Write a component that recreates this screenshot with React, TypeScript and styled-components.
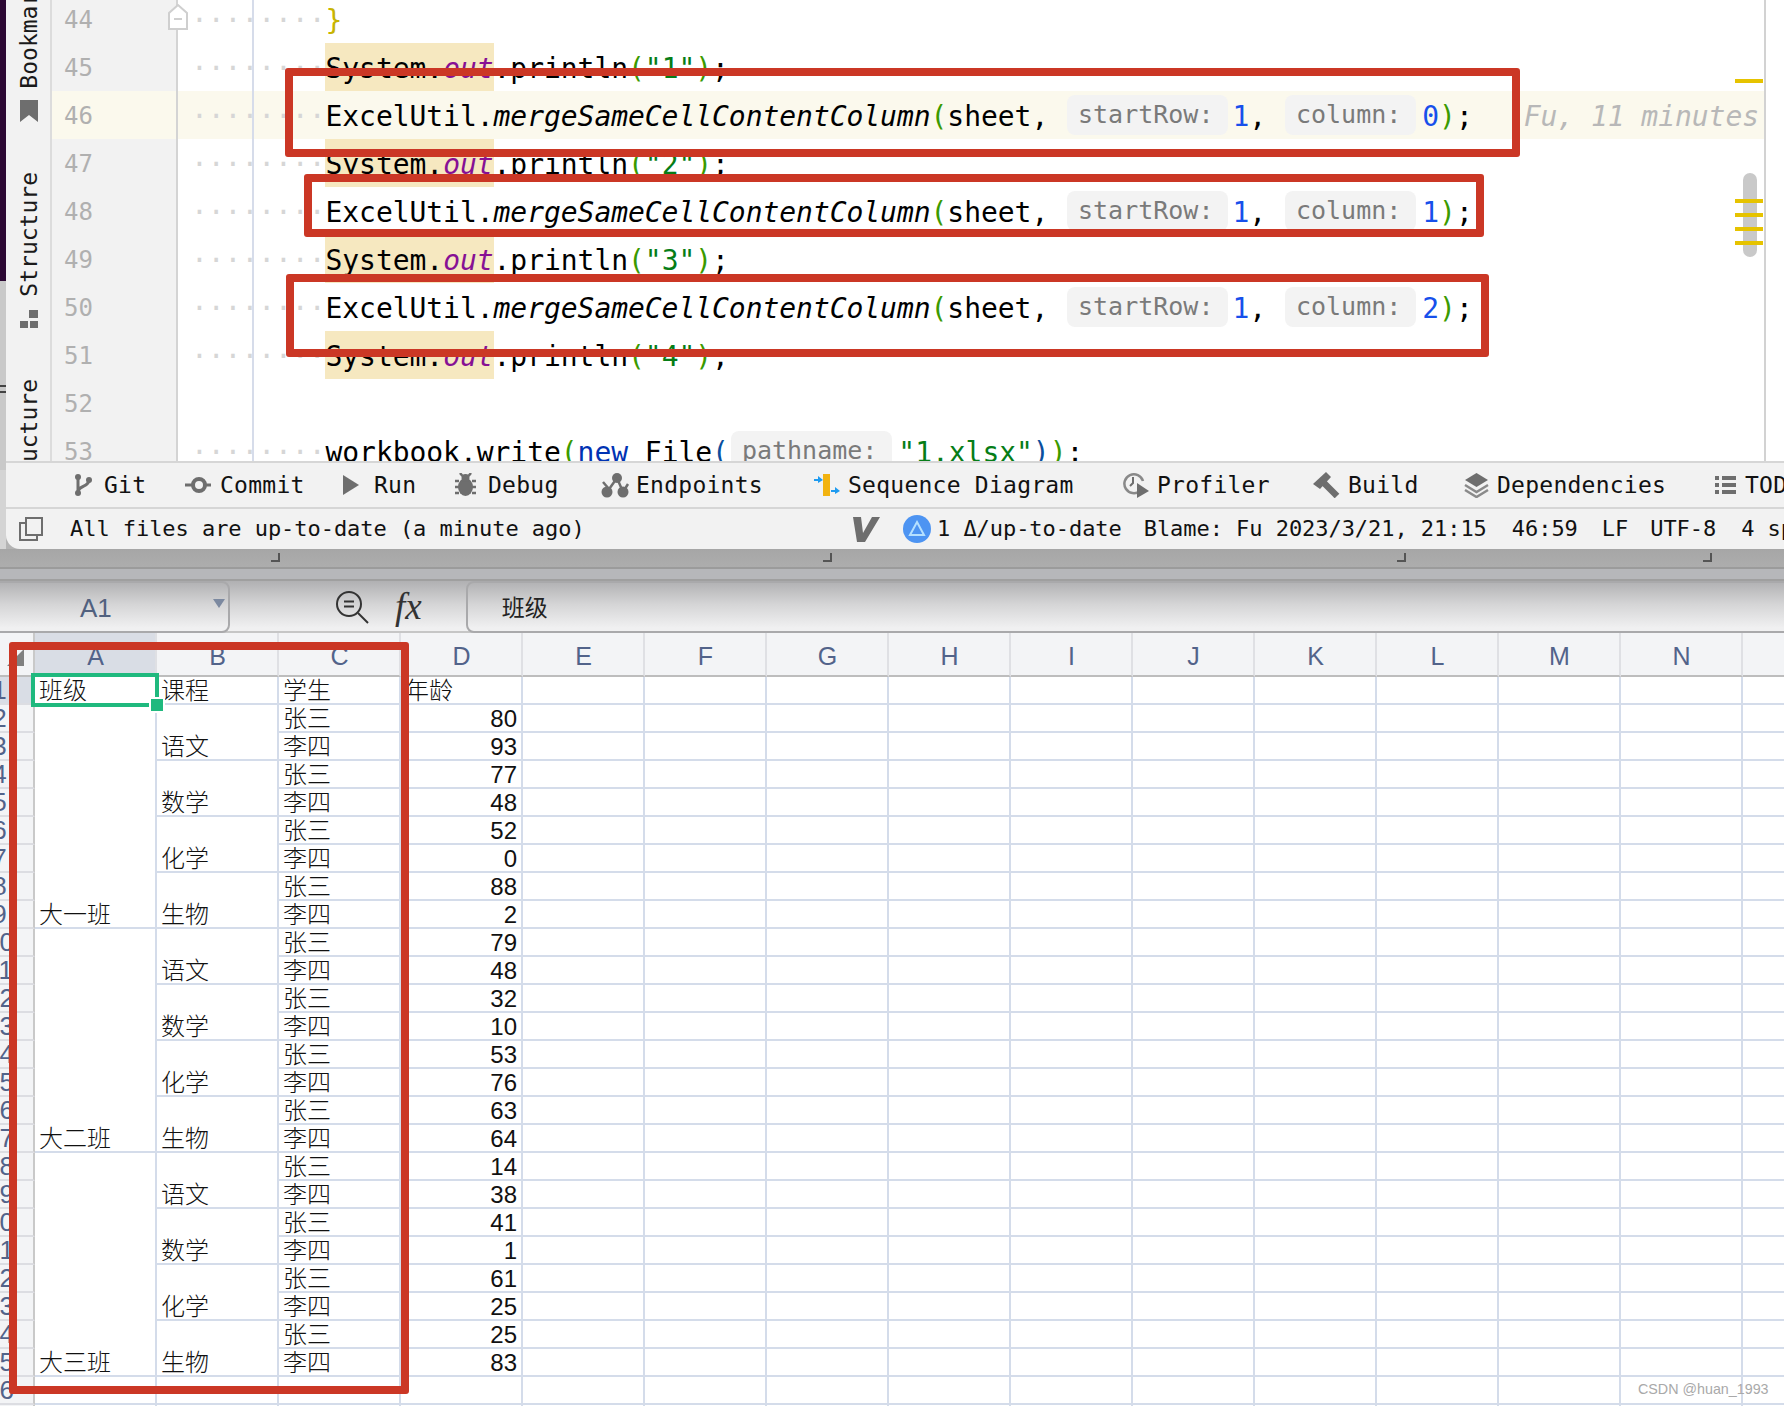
import React from "react";
import styled, { createGlobalStyle } from "styled-components";

const MONO = `"DejaVu Sans Mono", "Liberation Mono", monospace`;
const RED = "#cb3725";

const GlobalStyle = createGlobalStyle`
	html, body {
		margin: 0;
		padding: 0;
		background: #ffffff;
	}
	* {
		box-sizing: border-box;
	}
`;

const Screen = styled.div`
	position: relative;
	width: 1784px;
	height: 1406px;
	overflow: hidden;
	background: #ffffff;
`;

/* ---------- IDE window ---------- */

const Desktop = styled.div`
	display: flex;
	height: 549px;
	background: #b4b4b4;
`;

const DesktopEdge = styled.div`
	width: 6px;
	background: linear-gradient(
		#2c0833 0 281px,
		#c9c9c9 281px 385px,
		#444 385px 387px,
		#c9c9c9 387px 391px,
		#444 391px 393px,
		#c9c9c9 393px 470px,
		#d4d4d4 470px 549px
	);
`;

const IdeWindow = styled.div`
	flex: 1;
	display: flex;
	flex-direction: column;
	min-width: 0;
	overflow: hidden;
	border-bottom-left-radius: 14px;
	background: #f2f2f2;
`;

const EditorBody = styled.div`
	position: relative;
	display: flex;
	height: 461px;
	overflow: hidden;
	background: #ffffff;
`;

const SideStrip = styled.div`
	width: 46px;
	flex-shrink: 0;
	display: flex;
	flex-direction: column;
	align-items: center;
	overflow: hidden;
	background: #f2f2f2;
	border-right: 2px solid #dcdcdc;
	padding-left: 2px;
`;

const SideLabel = styled.div<{ $top: number }>`
	margin-top: ${(p) => p.$top}px;
	flex-shrink: 0;
	writing-mode: vertical-rl;
	transform: rotate(180deg);
	font: 23px/24px ${MONO};
	color: #1a1a1a;
	white-space: nowrap;
`;

const SideIcon = styled.svg<{ $top: number }>`
	margin-top: ${(p) => p.$top}px;
	flex-shrink: 0;
`;

const CodePane = styled.div`
	flex: 1;
	min-width: 0;
	overflow: hidden;
`;

const Lines = styled.div`
	margin-top: -5px;
`;

const Line = styled.div<{ $current?: boolean }>`
	display: flex;
	height: 48px;
	background: ${(p) => (p.$current ? "#fbf9ed" : "transparent")};
`;

const Gutter = styled.div<{ $current?: boolean }>`
	position: relative;
	width: 126px;
	flex-shrink: 0;
	padding-left: 12px;
	font: 24px/50px ${MONO};
	color: #b0b0b0;
	background: ${(p) => (p.$current ? "#fbf9ed" : "#f2f2f2")};
	border-right: 2px solid #d4d4d4;
`;

const FoldMark = styled.svg`
	position: absolute;
	left: 116px;
	top: 9px;
	z-index: 2;
`;

const CodeCell = styled.div`
	flex: 1;
	min-width: 0;
	height: 48px;
	overflow: hidden;
	padding-left: 13px;
	font: 28px/51px ${MONO};
	letter-spacing: -0.05px;
	color: #000000;
	white-space: pre;
	background-image: linear-gradient(#d6dcea, #d6dcea);
	background-size: 2px 100%;
	background-position: 74px 0;
	background-repeat: no-repeat;
`;

const Dots = styled.span`
	color: #d6d6d6;
`;

const Hl = styled.span`
	display: inline-block;
	height: 48px;
	vertical-align: top;
	background: #f6e8c0;
`;

const Field = styled.span`
	font-style: italic;
	color: #871094;
`;

const Method = styled.span`
	font-style: italic;
`;

const Paren = styled.span<{ $c?: string }>`
	color: ${(p) => p.$c || "#3a9a00"};
`;

const Str = styled.span`
	color: #067d17;
`;

const Num = styled.span`
	color: #1750eb;
`;

const Keyword = styled.span`
	color: #0033b3;
`;

const Hint = styled.span<{ $ml?: number; $mr?: number }>`
	display: inline-block;
	height: 40px;
	padding: 0 15px 0 11px;
	margin-left: ${(p) => p.$ml ?? 2}px;
	margin-right: ${(p) => p.$mr ?? 6}px;
	border-radius: 8px;
	font-size: 25px;
	line-height: 40px;
	letter-spacing: 0;
	vertical-align: 3px;
	color: #7a7a7a;
	background: #f3f3f3;
`;

const Blame = styled.span`
	margin-left: 51px;
	font-style: italic;
	color: #b8b8b8;
`;

const StripeEdge = styled.div`
	width: 20px;
	flex-shrink: 0;
	background: #ffffff;
	border-left: 2px solid #d2d2d2;
`;

const ScrollThumb = styled.div`
	position: absolute;
	left: 1737px;
	top: 173px;
	width: 14px;
	height: 84px;
	border-radius: 7px;
	background: #c9c9c9;
`;

const StripeMark = styled.div<{ $y: number }>`
	position: absolute;
	left: 1729px;
	top: ${(p) => p.$y}px;
	width: 28px;
	height: 4px;
	background: #e6c300;
`;

/* ---------- tool bar + status bar ---------- */

const ToolBar = styled.div`
	display: flex;
	align-items: center;
	height: 46px;
	padding-left: 67px;
	border-top: 2px solid #d6d6d6;
	white-space: nowrap;
`;

const ToolItem = styled.div<{ $w: number }>`
	display: flex;
	align-items: center;
	width: ${(p) => p.$w}px;
	flex-shrink: 0;
`;

const ToolIcon = styled.div<{ $w: number }>`
	width: ${(p) => p.$w}px;
	height: 28px;
	flex-shrink: 0;
	display: flex;
	align-items: center;
`;

const ToolLabel = styled.span`
	font: 23px/28px ${MONO};
	letter-spacing: 0.25px;
	color: #111111;
`;

const StatusBar = styled.div`
	display: flex;
	align-items: center;
	height: 42px;
	padding-left: 13px;
	border-top: 2px solid #d6d6d6;
	white-space: nowrap;
	overflow: hidden;
`;

const StatusGlyph = styled.svg`
	flex-shrink: 0;
`;

const StatusText = styled.span<{ $left: number }>`
	margin-left: ${(p) => p.$left}px;
	flex-shrink: 0;
	font: 22px/28px ${MONO};
	letter-spacing: -0.05px;
	color: #111111;
`;

const StatusMessage = styled(StatusText)`
	width: 783px;
`;

const StatusCircle = styled.svg`
	margin-left: 23px;
	flex-shrink: 0;
`;

/* ---------- formula bar ---------- */

const FormulaArea = styled.div`
	height: 84px;
	background: #ababab;
`;

const ShadowBand = styled.div`
	display: flex;
	height: 20px;
	padding-top: 4px;
	background: linear-gradient(#a6a6a6, #adadad);
	border-bottom: 2px solid #9b9b9b;
`;

const CropMark = styled.div<{ $left: number }>`
	width: 9px;
	height: 9px;
	margin-left: ${(p) => p.$left}px;
	border-right: 2px solid #555;
	border-bottom: 2px solid #555;
`;

const SliverBand = styled.div`
	height: 10px;
	background: #b6b7ba;
`;

const FormulaBar = styled.div`
	display: flex;
	align-items: center;
	height: 54px;
	background:
		linear-gradient(#c6c6c6, #c6c6c6) bottom / 100% 2px no-repeat,
		linear-gradient(#b0b0b2 0%, #d5d5d6 45%, #f0f0f1 90%);
	border-top: 2px solid #9f9f9f;
`;

const NameBox = styled.div`
	display: flex;
	align-items: center;
	width: 240px;
	height: 52px;
	margin-left: -10px;
	padding-left: 88px;
	padding-top: 2px;
	flex-shrink: 0;
	border: 2px solid #a9a9ab;
	border-radius: 8px;
	font: 26px/30px "Liberation Sans", Arial, sans-serif;
	color: #51617f;
`;

const NameArrow = styled.div`
	margin-left: auto;
	margin-right: 3px;
	margin-top: -10px;
	border-left: 6px solid transparent;
	border-right: 6px solid transparent;
	border-top: 9px solid #7c89a0;
`;

const ZoomIcon = styled.svg`
	margin-left: 105px;
	flex-shrink: 0;
`;

const FxLabel = styled.span`
	margin-left: 26px;
	flex-shrink: 0;
	font: italic 37px/40px "Liberation Serif", serif;
	color: #333;
`;

const FormulaInput = styled.div`
	flex: 1;
	height: 52px;
	margin-left: 44px;
	margin-right: -10px;
	padding-left: 34px;
	border: 2px solid #a9a9ab;
	border-radius: 8px;
	font: 23px/46px "Noto Sans CJK SC", sans-serif;
	color: #222;
`;

/* ---------- sheet ---------- */

const Sheet = styled.div`
	position: relative;
	display: grid;
	grid-template-columns: 69px repeat(14, 122px) 60px;
	grid-template-rows: 44px;
	grid-auto-rows: 28px;
	margin-left: -34px;
	width: 1840px;
`;

const Corner = styled.div`
	display: flex;
	align-items: flex-end;
	justify-content: flex-end;
	padding: 0 9px 9px 0;
	background: #f3f4f6;
	border-right: 2px solid #c9c9c9;
	border-bottom: 2px solid #bdbdbd;
`;

const ColHead = styled.div<{ $active?: boolean }>`
	display: flex;
	align-items: center;
	justify-content: center;
	padding-top: 3px;
	padding-left: 1px;
	font: 25px/30px "Liberation Sans", Arial, sans-serif;
	color: #52638a;
	background: ${(p) => (p.$active ? "#d9dde5" : "#f3f4f6")};
	border-right: 2px solid #dfe0e4;
	border-bottom: 2px solid #bdbdbd;
`;

const RowHead = styled.div<{ $active?: boolean }>`
	text-align: center;
	font: 26px/26px "Liberation Sans", Arial, sans-serif;
	color: #52638a;
	background: ${(p) => (p.$active ? "#d9dde5" : "#f3f4f6")};
	border-right: 2px solid #c9c9c9;
	border-bottom: 2px solid #dcdde2;
`;

const Cell = styled.div<{ $span?: number; $num?: boolean }>`
	grid-row: span ${(p) => p.$span || 1};
	display: flex;
	align-items: flex-end;
	justify-content: ${(p) => (p.$num ? "flex-end" : "flex-start")};
	padding: ${(p) => (p.$num ? "0 4px 0 0" : "0 0 2px 4px")};
	font: ${(p) =>
		p.$num
			? `24px/24px "Liberation Sans", Arial, sans-serif`
			: `300 24px/24px "Noto Sans CJK SC", sans-serif`};
	color: #111;
	white-space: nowrap;
	overflow: hidden;
	background: #ffffff;
	border-right: 2px solid #d4dcea;
	border-bottom: 2px solid #d4dcea;
`;

const Selection = styled.div`
	position: absolute;
	left: 65px;
	top: 40px;
	width: 128px;
	height: 34px;
	border: 4px solid #1fb97e;
`;

const SelectionHandle = styled.div`
	position: absolute;
	left: 116px;
	top: 22px;
	width: 12px;
	height: 12px;
	background: #1fb97e;
	box-shadow: 0 0 0 2px #ffffff;
`;

/* ---------- things lying over the page ---------- */

const RedBox = styled.div<{ $x: number; $y: number; $w: number; $h: number }>`
	position: absolute;
	left: ${(p) => p.$x}px;
	top: ${(p) => p.$y}px;
	width: ${(p) => p.$w}px;
	height: ${(p) => p.$h}px;
	border: 8px solid ${RED};
	border-radius: 3px;
`;

const Watermark = styled.div`
	position: absolute;
	left: 1638px;
	top: 1381px;
	font: 14.3px/17px "Liberation Sans", Arial, sans-serif;
	color: #a9a9a9;
`;

const INDENT = "········";

const Println = ({ n }: { n: string }) => (
	<>
		<Dots>{INDENT}</Dots>
		<Hl>
			System.<Field>out</Field>
		</Hl>
		.println<Paren>(</Paren>
		<Str>"{n}"</Str>
		<Paren>)</Paren>;
	</>
);

const MergeCall = ({ col, blame }: { col: string; blame?: boolean }) => (
	<>
		<Dots>{INDENT}</Dots>
		ExcelUtil.<Method>mergeSameCellContentColumn</Method>
		<Paren>(</Paren>sheet, <Hint $mr={4}>startRow:</Hint>
		<Num>1</Num>, <Hint>column:</Hint>
		<Num>{col}</Num>
		<Paren>)</Paren>;{blame && <Blame>Fu, 11 minutes ago · Merge cells</Blame>}
	</>
);

const codeLines: { no: number; code?: React.ReactNode; current?: boolean }[] = [
	{
		no: 44,
		code: (
			<>
				<Dots>{INDENT}</Dots>
				<Paren $c="#c8b400">{"}"}</Paren>
			</>
		),
	},
	{ no: 45, code: <Println n="1" /> },
	{ no: 46, code: <MergeCall col="0" blame />, current: true },
	{ no: 47, code: <Println n="2" /> },
	{ no: 48, code: <MergeCall col="1" /> },
	{ no: 49, code: <Println n="3" /> },
	{ no: 50, code: <MergeCall col="2" /> },
	{ no: 51, code: <Println n="4" /> },
	{ no: 52 },
	{
		no: 53,
		code: (
			<>
				<Dots>{INDENT}</Dots>
				workbook.write<Paren>(</Paren>
				<Keyword>new</Keyword> File<Paren $c="#0b4f9e">(</Paren>
				<Hint $ml={2}>pathname:</Hint>
				<Str>"1.xlsx"</Str>
				<Paren $c="#0b4f9e">)</Paren>
				<Paren>)</Paren>;
			</>
		),
	},
];

const GREY = "#6e6e6e";

const tools: { label: string; w: number; iconW: number; icon: React.ReactNode }[] = [
	{
		label: "Git",
		w: 112,
		iconW: 31,
		icon: (
			<svg width="22" height="24" viewBox="0 0 22 24">
				<circle cx="5" cy="4" r="3" fill={GREY} />
				<circle cx="5" cy="20" r="3" fill={GREY} />
				<circle cx="16" cy="7" r="3" fill={GREY} />
				<path d="M5 4V20M16 7C16 14 7 12 5 18" fill="none" stroke={GREY} strokeWidth="3" />
			</svg>
		),
	},
	{
		label: "Commit",
		w: 158,
		iconW: 35,
		icon: (
			<svg width="26" height="18" viewBox="0 0 26 18">
				<circle cx="14" cy="9" r="6" fill="none" stroke={GREY} strokeWidth="4" />
				<path d="M0 9H7M21 9H26" stroke={GREY} strokeWidth="3" />
			</svg>
		),
	},
	{
		label: "Run",
		w: 112,
		iconW: 31,
		icon: (
			<svg width="16" height="22" viewBox="0 0 16 22">
				<path d="M0 1L16 11L0 21Z" fill={GREY} />
			</svg>
		),
	},
	{
		label: "Debug",
		w: 146,
		iconW: 33,
		icon: (
			<svg width="21" height="24" viewBox="0 0 21 24">
				<ellipse cx="10.5" cy="14" rx="7.5" ry="9" fill={GREY} />
				<circle cx="10.5" cy="5" r="4" fill={GREY} />
				<path
					d="M5 0L7.5 3M16 0L13.5 3M0 8H4M17 8H21M0 14H4M17 14H21M0 20H4M17 20H21"
					stroke={GREY}
					strokeWidth="2.5"
				/>
			</svg>
		),
	},
	{
		label: "Endpoints",
		w: 213,
		iconW: 35,
		icon: (
			<svg width="30" height="26" viewBox="0 0 30 26">
				<circle cx="16" cy="6" r="5" fill={GREY} />
				<circle cx="6" cy="20" r="5.5" fill={GREY} />
				<circle cx="22" cy="20" r="5.5" fill={GREY} />
				<path d="M16 6L6 20M16 6L22 20M8 17L2 10M22 20L27 12" stroke={GREY} strokeWidth="2.5" />
			</svg>
		),
	},
	{
		label: "Sequence Diagram",
		w: 309,
		iconW: 34,
		icon: (
			<svg width="26" height="24" viewBox="0 0 26 24">
				<rect x="9" y="1" width="7" height="22" fill="#f2b311" />
				<path d="M0 6H4V3L9 7L4 10V8H0Z" fill="#1e9bf0" />
				<path d="M17 17H21V14L26 18L21 21V19H17Z" fill="#1e9bf0" />
			</svg>
		),
	},
	{
		label: "Profiler",
		w: 190,
		iconW: 34,
		icon: (
			<svg width="27" height="26" viewBox="0 0 27 26">
				<path
					d="M17 19A9.5 9.5 0 1 1 20 9"
					fill="none"
					stroke={GREY}
					strokeOpacity="0.8"
					strokeWidth="2.5"
				/>
				<path d="M10 5V11L7 14" fill="none" stroke={GREY} strokeWidth="2" />
				<path d="M14 11L26 19L14 26Z" fill={GREY} />
			</svg>
		),
	},
	{
		label: "Build",
		w: 151,
		iconW: 35,
		icon: (
			<svg width="27" height="26" viewBox="0 0 27 26">
				<path d="M9 9L24 24" stroke={GREY} strokeWidth="6.5" />
				<path d="M0 12L13 0L18 5L7 17Z" fill={GREY} />
			</svg>
		),
	},
	{
		label: "Dependencies",
		w: 251,
		iconW: 33,
		icon: (
			<svg width="25" height="26" viewBox="0 0 25 26">
				<path d="M12.5 1L24 8L12.5 15L1 8Z" fill={GREY} />
				<path d="M1 13L12.5 20L24 13M1 18L12.5 25L24 18" fill="none" stroke="#8a8a8a" strokeWidth="2.5" />
			</svg>
		),
	},
	{
		label: "TODO",
		w: 80,
		iconW: 30,
		icon: (
			<svg width="21" height="20" viewBox="0 0 21 20">
				<path d="M0 3H4M7 3H21M0 10H4M7 10H21M0 17H4M7 17H21" stroke={GREY} strokeWidth="4" />
			</svg>
		),
	},
];

const COLS = ["A", "B", "C", "D", "E", "F", "G", "H", "I", "J", "K", "L", "M", "N", ""];
const EMPTY_COLS = 11;
const AGES = [80, 93, 77, 48, 52, 0, 88, 2, 79, 48, 32, 10, 53, 76, 63, 64, 14, 38, 41, 1, 61, 25, 25, 83];
const COURSES = ["语文", "数学", "化学", "生物"];
const CLASSES = ["大一班", "大二班", "大三班"];

const Blanks = ({ count, prefix }: { count: number; prefix: string }) => (
	<>
		{Array.from({ length: count }, (_, i) => (
			<Cell key={`${prefix}-${i}`} />
		))}
	</>
);

const SheetRows = () => {
	const rows: React.ReactNode[] = [];
	AGES.forEach((age, i) => {
		const rowNo = i + 2;
		rows.push(<RowHead key={`h${rowNo}`}>{rowNo}</RowHead>);
		if (i % 8 === 0) {
			rows.push(
				<Cell key={`a${rowNo}`} $span={8}>
					{CLASSES[i / 8]}
				</Cell>
			);
		}
		if (i % 2 === 0) {
			rows.push(
				<Cell key={`b${rowNo}`} $span={2}>
					{COURSES[(i / 2) % 4]}
				</Cell>
			);
		}
		rows.push(<Cell key={`c${rowNo}`}>{i % 2 === 0 ? "张三" : "李四"}</Cell>);
		rows.push(
			<Cell key={`d${rowNo}`} $num>
				{age}
			</Cell>
		);
		rows.push(<Blanks key={`e${rowNo}`} count={EMPTY_COLS} prefix={`r${rowNo}`} />);
	});
	return <>{rows}</>;
};

const App = () => {
	return (
		<Screen>
			<GlobalStyle />
			<Desktop>
				<DesktopEdge />
				<IdeWindow>
					<EditorBody>
						<SideStrip>
							<SideLabel $top={-36}>Bookmarks</SideLabel>
							<SideIcon $top={11} width="18" height="22" viewBox="0 0 18 22">
								<path d="M0 0H18V22L9 15L0 22Z" fill={GREY} />
							</SideIcon>
							<SideLabel $top={50}>Structure</SideLabel>
							<SideIcon $top={14} width="18" height="18" viewBox="0 0 18 18">
								<path d="M9 0H18V8H9ZM0 11H8V18H0ZM10 11H18V18H10Z" fill={GREY} />
							</SideIcon>
							<SideLabel $top={51}>Structure</SideLabel>
						</SideStrip>
						<CodePane>
							<Lines>
								{codeLines.map((l) => (
									<Line key={l.no} $current={l.current}>
										<Gutter $current={l.current}>
											{l.no}
											{l.no === 44 && (
												<FoldMark width="20" height="26" viewBox="0 0 20 26">
													<path d="M10 1L19 9V25H1V9Z" fill="#fff" stroke="#cfcfcf" strokeWidth="2" />
													<path d="M6 15H14" stroke="#cfcfcf" strokeWidth="2" />
												</FoldMark>
											)}
										</Gutter>
										<CodeCell>{l.code}</CodeCell>
									</Line>
								))}
							</Lines>
						</CodePane>
						<StripeEdge />
						<ScrollThumb />
						<StripeMark $y={79} />
						<StripeMark $y={199} />
						<StripeMark $y={213} />
						<StripeMark $y={227} />
						<StripeMark $y={241} />
					</EditorBody>
					<ToolBar>
						{tools.map((t) => (
							<ToolItem key={t.label} $w={t.w}>
								<ToolIcon $w={t.iconW}>{t.icon}</ToolIcon>
								<ToolLabel>{t.label}</ToolLabel>
							</ToolItem>
						))}
					</ToolBar>
					<StatusBar>
						<StatusGlyph width="24" height="24" viewBox="0 0 24 24">
							<path d="M7 1H23V18H7Z" fill="none" stroke={GREY} strokeWidth="2" />
							<path d="M7 6H1V23H18V18" fill="none" stroke={GREY} strokeWidth="2" />
						</StatusGlyph>
						<StatusMessage $left={27}>All files are up-to-date (a minute ago)</StatusMessage>
						<StatusGlyph width="27" height="25" viewBox="0 0 27 25">
							<path d="M0 0H8L10 16L19 0H27L12 25H4Z" fill={GREY} />
						</StatusGlyph>
						<StatusCircle width="28" height="28" viewBox="0 0 28 28">
							<circle cx="14" cy="14" r="14" fill="#4d94f2" />
							<path d="M14 7L21 20H7Z" fill="none" stroke="#b5e0ff" strokeWidth="2" />
						</StatusCircle>
						<StatusText $left={6}>1 Δ/up-to-date</StatusText>
						<StatusText $left={22}>Blame: Fu 2023/3/21, 21:15</StatusText>
						<StatusText $left={25}>46:59</StatusText>
						<StatusText $left={24}>LF</StatusText>
						<StatusText $left={22}>UTF-8</StatusText>
						<StatusText $left={25}>4 spaces</StatusText>
					</StatusBar>
				</IdeWindow>
			</Desktop>

			<FormulaArea>
				<ShadowBand>
					<CropMark $left={271} />
					<CropMark $left={543} />
					<CropMark $left={565} />
					<CropMark $left={297} />
				</ShadowBand>
				<SliverBand />
				<FormulaBar>
					<NameBox>
						A1
						<NameArrow />
					</NameBox>
					<ZoomIcon width="34" height="34" viewBox="0 0 34 34">
						<circle cx="14" cy="14" r="12" fill="none" stroke="#333" strokeWidth="2" />
						<path d="M23 23L33 33" stroke="#333" strokeWidth="2" />
						<path d="M9 11.5H19M9 16.5H19" stroke="#333" strokeWidth="2" />
					</ZoomIcon>
					<FxLabel>fx</FxLabel>
					<FormulaInput>班级</FormulaInput>
				</FormulaBar>
			</FormulaArea>

			<Sheet>
				<Corner>
					<svg width="17" height="17" viewBox="0 0 17 17">
						<path d="M17 0V17H0Z" fill="#808080" />
					</svg>
				</Corner>
				{COLS.map((c, i) => (
					<ColHead key={c || "end"} $active={i === 0}>
						{c}
					</ColHead>
				))}
				<RowHead $active>1</RowHead>
				<Cell>班级</Cell>
				<Cell>课程</Cell>
				<Cell>学生</Cell>
				<Cell>年龄</Cell>
				<Blanks count={EMPTY_COLS} prefix="r1" />
				<SheetRows />
				{[26, 27].map((rowNo) => (
					<React.Fragment key={rowNo}>
						<RowHead>{rowNo}</RowHead>
						<Blanks count={15} prefix={`r${rowNo}`} />
					</React.Fragment>
				))}
				<Selection>
					<SelectionHandle />
				</Selection>
			</Sheet>

			<RedBox $x={285} $y={68} $w={1235} $h={89} />
			<RedBox $x={304} $y={174} $w={1180} $h={63} />
			<RedBox $x={286} $y={274} $w={1203} $h={83} />
			<RedBox $x={9} $y={642} $w={400} $h={752} />
			<Watermark>CSDN @huan_1993</Watermark>
		</Screen>
	);
};

export default App;
